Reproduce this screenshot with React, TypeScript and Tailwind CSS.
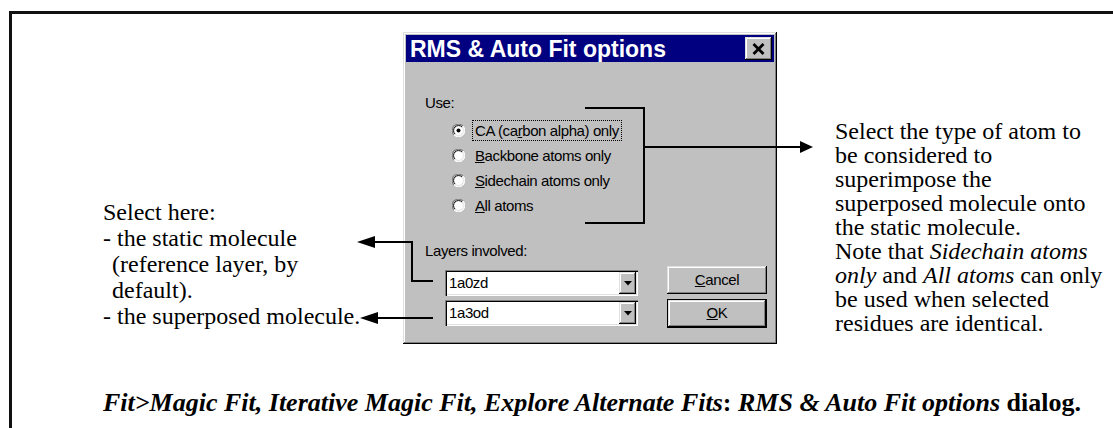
import React from "react";

const raised =
  "shadow-[inset_-1px_-1px_#000000,inset_1px_1px_#dfdfdf,inset_-2px_-2px_#808080,inset_2px_2px_#ffffff]";
const sunken =
  "shadow-[inset_1px_1px_#808080,inset_2px_2px_#000000,inset_-1px_-1px_#ffffff,inset_-2px_-2px_#dfdfdf]";

function Radio({ checked }: { checked?: boolean }) {
  return (
    <svg width="13" height="13" viewBox="0 0 13 13" className="shrink-0">
      <circle cx="6.5" cy="6.5" r="6" fill="#ffffff" />
      <path d="M11 2 A6 6 0 0 0 2 11" fill="none" stroke="#808080" strokeWidth="1.2" />
      <path d="M10 3 A4.8 4.8 0 0 0 3 10" fill="none" stroke="#000000" strokeWidth="1" />
      <path d="M2 11 A6 6 0 0 0 11 2" fill="none" stroke="#ffffff" strokeWidth="1" />
      <path d="M3 10 A4.8 4.8 0 0 0 10 3" fill="none" stroke="#dfdfdf" strokeWidth="1" />
      {checked && <circle cx="6.5" cy="6.5" r="2" fill="#000000" />}
    </svg>
  );
}

function RadioRow({ children, checked, focus }: { children: React.ReactNode; checked?: boolean; focus?: boolean }) {
  return (
    <div className="h-[25px] flex items-center gap-[7px]">
      <Radio checked={checked} />
      <span
        className={
          "px-[2px] leading-[19px] border " +
          (focus ? "border-dotted border-black" : "border-transparent")
        }
      >
        {children}
      </span>
    </div>
  );
}

function Combo({ value }: { value: string }) {
  return (
    <div className={"w-[193px] h-[26px] bg-white flex items-center p-[2px] " + sunken}>
      <span className="flex-1 pl-[2px] leading-[20px]">{value}</span>
      <div className={"w-[17px] h-[22px] bg-[#c0c0c0] flex items-center justify-center " + raised}>
        <svg width="8" height="5" viewBox="0 0 8 5">
          <polygon points="0,0 8,0 4,4.5" fill="#000" />
        </svg>
      </div>
    </div>
  );
}

export default function App() {
  return (
    <div
      className="relative w-[1113px] h-[428px] bg-white overflow-hidden text-black"
      style={{ fontFamily: '"Liberation Serif", "Times New Roman", serif' }}
    >
      <div className="ml-[9px] mt-[11px] h-[417px] border-l-[3px] border-t-[3px] border-[#111111]">
        <div className="flex items-start">
          {/* Left description */}
          <div className="w-[391px] pl-[91px] pt-[185px] text-[24px] leading-[26px]">
            <div>Select here:</div>
            <div>- the static molecule</div>
            <div className="pl-[9px]">(reference layer, by</div>
            <div className="pl-[9px]">default).</div>
            <div>- the superposed molecule.</div>
          </div>

          {/* Dialog */}
          <div
            className={"mt-[18px] w-[374px] h-[312px] bg-[#c0c0c0] p-[3px] " + raised}
            style={{ fontFamily: '"Liberation Sans", Arial, sans-serif' }}
          >
            <div className="h-[27px] bg-[#000080] flex items-center justify-between pl-[4px] pr-[2px]">
              <span className="text-white font-bold text-[23px] leading-[26px]">
                RMS &amp; Auto Fit options
              </span>
              <div className={"w-[27px] h-[23px] bg-[#c0c0c0] flex items-center justify-center " + raised}>
                <svg width="13" height="12" viewBox="0 0 13 12">
                  <path d="M1.5 1 L11.5 11 M11.5 1 L1.5 11" stroke="#000" strokeWidth="2.8" />
                </svg>
              </div>
            </div>

            <div className="pl-[19px] pt-[32px] text-[15px] tracking-[-0.4px]">
              <div className="leading-[17px]">Use:</div>
              <div className="mt-[7px] pl-[27px]">
                <RadioRow checked focus>
                  CA (ca<span className="underline">r</span>bon alpha) only
                </RadioRow>
                <RadioRow>
                  <span className="underline">B</span>ackbone atoms only
                </RadioRow>
                <RadioRow>
                  <span className="underline">S</span>idechain atoms only
                </RadioRow>
                <RadioRow>
                  <span className="underline">A</span>ll atoms
                </RadioRow>
              </div>
              <div className="mt-[24px] leading-[17px]">Layers involved:</div>
              <div className="mt-[7px] flex items-start">
                <div className="ml-[20px] mt-[4px] flex flex-col gap-[4px]">
                  <Combo value="1a0zd" />
                  <Combo value="1a3od" />
                </div>
                <div className="ml-[29px] flex flex-col gap-[5px]">
                  <div className={"w-[100px] h-[28px] flex items-center justify-center " + raised}>
                    <span>
                      <span className="underline">C</span>ancel
                    </span>
                  </div>
                  <div className="w-[100px] h-[29px] border border-black">
                    <div className={"w-full h-full flex items-center justify-center " + raised}>
                      <span>
                        <span className="underline">O</span>K
                      </span>
                    </div>
                  </div>
                </div>
              </div>
            </div>
          </div>

          {/* Right description */}
          <div className="pl-[58px] pt-[105px] text-[24px] leading-[24px]">
            <div>Select the type of atom to</div>
            <div>be considered to</div>
            <div>superimpose the</div>
            <div>superposed molecule onto</div>
            <div>the static molecule.</div>
            <div>
              Note that <i>Sidechain atoms</i>
            </div>
            <div>
              <i>only</i> and <i>All atoms</i> can only
            </div>
            <div>be used when selected</div>
            <div>residues are identical.</div>
          </div>
        </div>
      </div>

      {/* Caption */}
      <div className="absolute left-[103px] top-[389px] text-[26px] leading-[28px] font-bold whitespace-nowrap">
        <i>Fit&gt;Magic Fit, Iterative Magic Fit, Explore Alternate Fits</i>: <i>RMS &amp; Auto Fit options</i> dialog.
      </div>

      {/* Annotation leader lines */}
      <svg className="absolute inset-0 pointer-events-none" width="1113" height="428">
        <path d="M585 108 H644 V223 H585" fill="none" stroke="#000" strokeWidth="2" />
        <path d="M644 147 H801" fill="none" stroke="#000" strokeWidth="2" />
        <polygon points="800,141 813,147 800,153" fill="#000" />
        <path d="M374 242 H412 V281 H433" fill="none" stroke="#000" strokeWidth="2" />
        <polygon points="357,242 375,236 375,248" fill="#000" />
        <path d="M377 318 H433" fill="none" stroke="#000" strokeWidth="2" />
        <polygon points="360,318 378,312 378,324" fill="#000" />
      </svg>
    </div>
  );
}
